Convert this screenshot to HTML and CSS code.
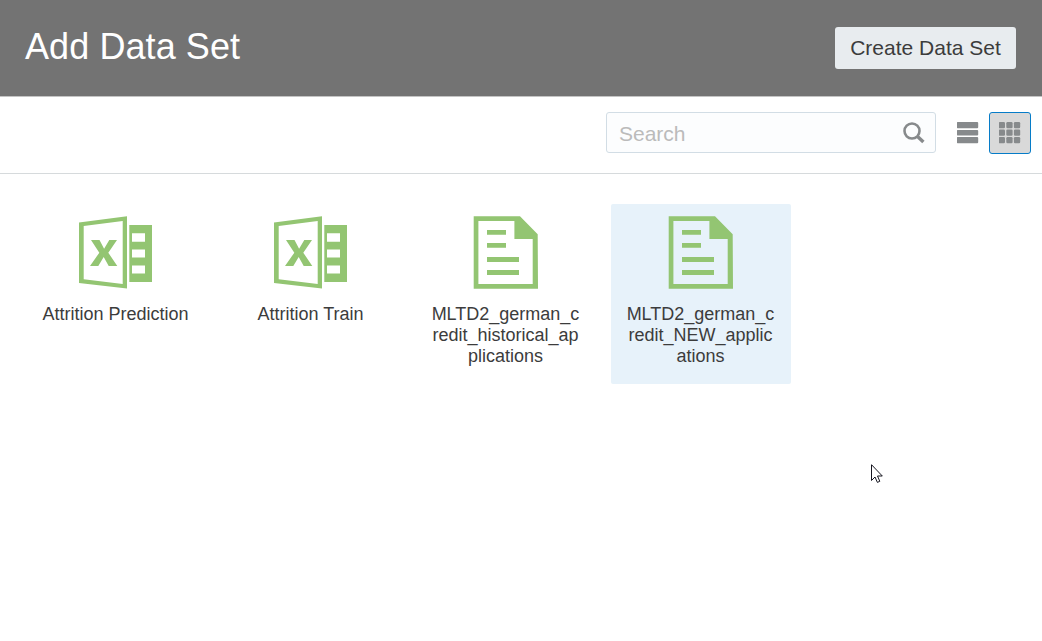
FILE: index.html
```html
<!DOCTYPE html>
<html lang="en">
<head>
<meta charset="utf-8">
<title>Add Data Set</title>
<link rel="stylesheet" href="styles.css">
</head>
<body>
<svg class="sprite" aria-hidden="true">
  <symbol id="excel" viewBox="0 0 80 76">
    <path fill-rule="evenodd" d="M3 8.5 51 2.3v72.2L3 69zM7.7 12v53.2l39 4.7V6.9z"/>
    <path fill-rule="evenodd" d="M53.3 11H76v57H53.3zM56 19.3v8.4h13v-8.4zM56 35.6v7.8h13v-7.8zM56 51.6v7.8h13v-7.8z"/>
    <path d="M15 26h8.5l4.6 8.7 5.2-8.7H41l-8.7 12.7L41.3 52h-8.6l-5-9-5.4 9H14l9.3-13.3z"/>
  </symbol>
  <symbol id="document" viewBox="0 0 80 76">
    <path fill-rule="evenodd" d="M7.7 2.3h46.3L71.7 20.3 72 74.7H7.7zM12.4 7v63H66.7V25H48.4V7z"/>
    <path d="M21 16h19v4.8H21zM21 29h19v4.8H21zM21 43.1h32v4.8H21zM21 56.1h32v4.8H21z"/>
  </symbol>
</svg>
<header class="header">
  <h1 class="title">Add Data Set</h1>
  <button class="create">Create Data Set</button>
</header>
<div class="toolbar">
  <label class="search">
    <input class="search-input" type="text" placeholder="Search">
    <svg class="search-icon" width="22" height="22" viewBox="0 0 22 22">
      <circle cx="9" cy="9" r="7.5" fill="none" stroke="#878a8c" stroke-width="2.6"/>
      <path d="M14 14 20.4 20" stroke="#878a8c" stroke-width="3.4"/>
    </svg>
  </label>
  <button class="view" aria-label="List view">
    <svg width="22" height="22" viewBox="0.4 0 22 22" fill="#878a8c">
      <rect x="0" y="0" width="21.6" height="6.2" rx="1"/>
      <rect x="0" y="8" width="21.6" height="5.4" rx="1"/>
      <rect x="0" y="15" width="21.6" height="6.2" rx="1"/>
    </svg>
  </button>
  <button class="view view-active" aria-label="Grid view">
    <svg width="22" height="22" viewBox="0.3 0 22 22" fill="#878a8c">
      <rect x="0" y="0" width="6.3" height="6.2" rx="1.2"/><rect x="7.6" y="0" width="6.3" height="6.2" rx="1.2"/><rect x="15.2" y="0" width="6.3" height="6.2" rx="1.2"/>
      <rect x="0" y="7.5" width="6.3" height="6.2" rx="1.2"/><rect x="7.6" y="7.5" width="6.3" height="6.2" rx="1.2"/><rect x="15.2" y="7.5" width="6.3" height="6.2" rx="1.2"/>
      <rect x="0" y="15" width="6.3" height="6.2" rx="1.2"/><rect x="7.6" y="15" width="6.3" height="6.2" rx="1.2"/><rect x="15.2" y="15" width="6.3" height="6.2" rx="1.2"/>
    </svg>
  </button>
</div>
<main class="tiles">
  <div class="tile"><svg class="tile-icon"><use href="#excel"/></svg><div class="tile-label">Attrition Prediction</div></div>
  <div class="tile"><svg class="tile-icon"><use href="#excel"/></svg><div class="tile-label">Attrition Train</div></div>
  <div class="tile"><svg class="tile-icon"><use href="#document"/></svg><div class="tile-label">MLTD2_german_credit_historical_applications</div></div>
  <div class="tile tile-hover"><svg class="tile-icon"><use href="#document"/></svg><div class="tile-label">MLTD2_german_credit_NEW_applications</div></div>
</main>
<svg class="pointer" width="13" height="20" viewBox="0 0 13 20">
  <path d="M.5.7v15.8L4 13l2.4 5.4 2.4-1.1L6.5 12h4.8z" fill="#fff" stroke="#15151f" stroke-width="1"/>
</svg>
</body>
</html>
```
FILE: styles.css
```css
* { box-sizing: border-box; }
body {
  margin: 0;
  height: 641px;
  overflow: hidden;
  background: #fff;
  color: #3c3c3c;
  font-family: "Liberation Sans", Arial, sans-serif;
}
.sprite { display: none; }
.header {
  display: flex;
  align-items: flex-start;
  justify-content: space-between;
  height: 97px;
  padding: 27px 26px 0 25px;
  background: #737373;
  border-bottom: 1px solid #c4c4c4;
}
.title {
  margin: 0;
  color: #fff;
  font-size: 36px;
  font-weight: 400;
  line-height: 40px;
  letter-spacing: 0.08px;
}
.create {
  width: 181px;
  height: 42px;
  padding: 0;
  border: 0;
  border-radius: 3px;
  background: #e8ecef;
  color: #3c3c3c;
  font: 21px/42px "Liberation Sans", Arial, sans-serif;
}
.toolbar {
  display: flex;
  justify-content: flex-end;
  height: 77px;
  padding: 15px 11px 0 0;
  border-bottom: 1px solid #d6dadc;
}
.search {
  display: flex;
  align-items: center;
  width: 330px;
  height: 41px;
  margin-right: 11px;
  padding: 0 10px 0 12px;
  border: 1px solid #d2dde5;
  border-radius: 3px;
  background: #fcfdfe;
}
.search-input {
  flex: 1;
  min-width: 0;
  padding: 2px 0 0;
  border: 0;
  outline: 0;
  background: transparent;
  font: 21px "Liberation Sans", Arial, sans-serif;
}
.search-input::placeholder { color: #bbb; }
.search-icon { flex: none; }
.view {
  display: flex;
  align-items: center;
  justify-content: center;
  width: 42px;
  height: 42px;
  padding: 0;
  border: 1px solid transparent;
  border-radius: 3px;
  background: transparent;
}
.view-active {
  border-color: #067cc8;
  background: #d9d9d9;
}
.tiles {
  display: flex;
  gap: 15px;
  padding: 30px 26px;
}
.tile {
  width: 180px;
  height: 180px;
  padding: 10px 15px 0;
  border-radius: 2px;
  text-align: center;
}
.tile-hover { background: #e7f2fa; }
.tile-icon {
  display: block;
  width: 80px;
  height: 76px;
  margin: 0 auto 14px;
  fill: #93c572;
}
.tile-label {
  margin-right: 1px;
  font-size: 18px;
  line-height: 21px;
  overflow-wrap: anywhere;
}
.pointer {
  position: absolute;
  left: 871px;
  top: 464px;
}
```
